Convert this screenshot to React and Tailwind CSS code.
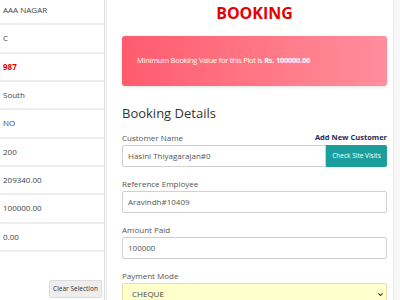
import React from "react";

const plotInfo = [
  { v: "AAA NAGAR" },
  { v: "C" },
  { v: "987", hot: true },
  { v: "South" },
  { v: "NO" },
  { v: "200" },
  { v: "209340.00" },
  { v: "100000.00" },
  { v: "0.00" },
];

function Field({ label, value, extra }) {
  return (
    <div className="mb-[10px]">
      <div className="flex h-[14px] items-center justify-between text-[8px] text-[#555]">
        <span>{label}</span>
        {extra}
      </div>
      <div className="flex h-[22px] items-center rounded-[2px] border border-[#d0d0d0] bg-white px-[5px] text-[8px] text-[#555]">
        {value}
      </div>
    </div>
  );
}

export default function App() {
  return (
    <div className="flex h-[300px] w-[400px] overflow-hidden bg-white font-['Open_Sans',sans-serif]">
      {/* plot summary */}
      <div className="flex w-[105px] shrink-0 flex-col border-r border-[#e2e2e2]">
        <div className="-mt-[3px]">
          {plotInfo.map((p, i) => (
            <div
              key={i}
              className={
                "flex h-[28.33px] items-center border-b-2 border-[#eeeeee] pl-[3px] text-[8px] " +
                (p.hot ? "font-bold text-[#e10000]" : "text-[#444]")
              }
            >
              {p.v}
            </div>
          ))}
        </div>
        <div className="mt-auto flex justify-end pb-[2px] pr-[2px]">
          <button className="h-[18px] w-[53px] rounded-[2px] border border-[#dcdcdc] bg-[#eeeeee] text-[6.5px] text-[#333]">
            Clear Selection
          </button>
        </div>
      </div>

      {/* booking form */}
      <div className="ml-[1px] flex-1 border-l border-r border-[#ececec] pl-[15px] pr-[6px] shadow-[0_0_4px_rgba(0,0,0,0.06)]">
        <div className="flex h-[36px] items-start justify-center pt-[1px] text-[16px] font-bold text-[#e60000]">
          BOOKING
        </div>
        <div className="flex h-[50px] items-center rounded-[3px] bg-linear-to-r from-[#ff5a6e] to-[#ff8e9c] pl-[15px] text-[7.5px] tracking-[-0.25px] text-white shadow-[0_1px_3px_rgba(0,0,0,0.12)]">
          <span>
            Minimum Booking Value for this Plot is <b>Rs. 100000.00</b>
          </span>
        </div>
        <div className="mt-[17px] h-[28px] text-[13px] leading-[20px] text-[#333]">Booking Details</div>

        <div className="mb-[10px]">
          <div className="flex h-[14px] items-center justify-between text-[8px] text-[#555]">
            <span>Customer Name</span>
            <span className="text-[7.5px] font-bold text-[#1c2b5a]">Add New Customer</span>
          </div>
          <div className="flex h-[22px]">
            <div className="flex flex-1 items-center rounded-l-[2px] border border-[#d0d0d0] px-[5px] text-[8px] text-[#555]">
              Hasini Thiyagarajan#0
            </div>
            <button className="w-[61px] rounded-r-[2px] bg-[#1a9f9c] text-[6.5px] text-white">
              Check Site Visits
            </button>
          </div>
        </div>

        <Field label="Reference Employee" value="Aravindh#10409" />
        <Field label="Amount Paid" value="100000" />

        <div>
          <div className="flex h-[14px] items-center text-[8px] text-[#555]">Payment Mode</div>
          <div className="flex h-[22px] items-center justify-between rounded-[2px] border border-[#e6e0a8] bg-[#ffffcc] pl-[9px] pr-[2px] text-[8px] text-[#444]">
            <span>CHEQUE</span>
            <svg width="7" height="7" viewBox="0 0 10 10">
              <path d="M2 3.5 L5 6.5 L8 3.5" fill="none" stroke="#333" strokeWidth="1.6" />
            </svg>
          </div>
        </div>
      </div>
      <div className="w-[6px] shrink-0 bg-[#f8f8f8]" />
    </div>
  );
}
